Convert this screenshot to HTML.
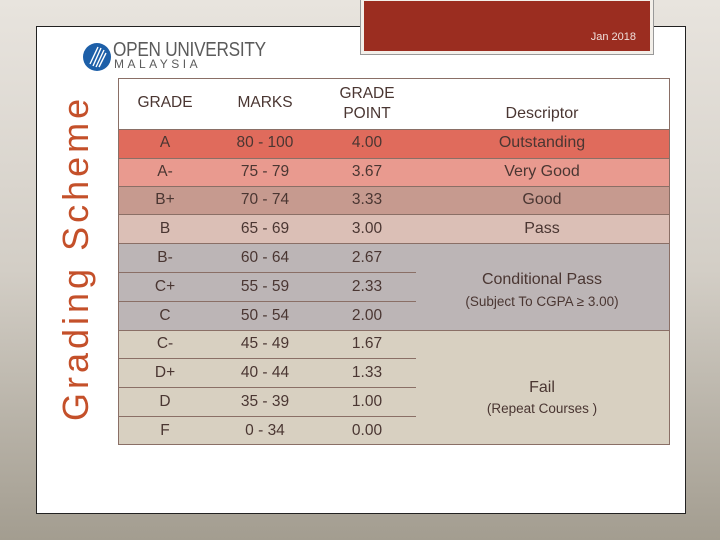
<!DOCTYPE html>
<html><head><meta charset="utf-8"><style>
*{margin:0;padding:0;box-sizing:border-box}
body{width:720px;height:540px;overflow:hidden;position:relative;font-family:"Liberation Sans",sans-serif;background:linear-gradient(#e8e4de 0%,#d3cec6 50%,#a39d90 100%)}
.panel{position:absolute;left:36px;top:26px;width:650px;height:488px;background:#fff;border:1px solid #222}
.red{position:absolute;left:361px;top:-2px;width:292px;height:56px;background:#9b2d20;border:3px solid #f3efe9;outline:1px solid #999}
.red span{position:absolute;right:14px;bottom:8px;color:#f0e0dc;font-size:11px}
.vt{position:absolute;left:56px;top:421px;transform:rotate(-90deg);transform-origin:0 0;color:#c4502a;font-size:36px;letter-spacing:4px;white-space:nowrap;width:360px;line-height:40px}
.tbl{position:absolute;left:118px;top:78px;width:552px;height:367px;border:1px solid #8a6f66;background:#fff;overflow:hidden}
.c{position:absolute;text-align:center;color:#4a3632;font-size:15.5px;line-height:16px}
.bg{position:absolute;left:0;width:550px}
.ln{position:absolute;left:0;width:297px;height:1px;background:#8a6f66}
.hl{position:absolute;left:0;width:550px;height:1px;background:#8a6f66}
</style></head><body>
<div class="panel"></div>
<div class="red"><span>Jan 2018</span></div>
<div class="vt">Grading Scheme</div>
<svg style="position:absolute;left:82px;top:42px" width="30" height="30" viewBox="0 0 30 30"><circle cx="15" cy="15" r="14" fill="#1d5fa8"/><g stroke="#fff" stroke-width="1.4"><line x1="8" y1="22" x2="16" y2="5"/><line x1="11" y1="24" x2="19" y2="6"/><line x1="14" y1="25" x2="22" y2="8"/><line x1="17" y1="25" x2="24" y2="11"/></g></svg>
<div style="position:absolute;left:113px;top:40px;color:#5b5b5b;font-size:20px;letter-spacing:-0.3px;line-height:20px;transform:scaleX(0.86);transform-origin:0 0;white-space:nowrap">OPEN UNIVERSITY</div>
<div style="position:absolute;left:114px;top:58px;color:#5b5b5b;font-size:12px;letter-spacing:3.5px;line-height:13px">MALAYSIA</div>
<div class="tbl">
<div class="bg" style="top:50px;height:29px;background:#e06b5c"></div>
<div class="bg" style="top:79px;height:28px;background:#e99a8f"></div>
<div class="bg" style="top:107px;height:28px;background:#c69a8f"></div>
<div class="bg" style="top:135px;height:29px;background:#dbbfb6"></div>
<div class="bg" style="top:164px;height:87px;background:#bcb5b6"></div>
<div class="bg" style="top:251px;height:115px;background:#d8d0c1"></div>
<div class="hl" style="top:50px"></div><div class="hl" style="top:79px"></div><div class="hl" style="top:107px"></div><div class="hl" style="top:135px"></div><div class="hl" style="top:164px"></div><div class="hl" style="top:251px"></div>
<div class="ln" style="top:193px"></div><div class="ln" style="top:222px"></div><div class="ln" style="top:279px"></div><div class="ln" style="top:308px"></div><div class="ln" style="top:337px"></div>
</div>
<div class="c" style="left:118px;width:94px;top:95px">GRADE</div>
<div class="c" style="left:218px;width:94px;top:95px">MARKS</div>
<div class="c" style="left:320px;width:94px;top:84px;line-height:20px">GRADE<br>POINT</div>
<div class="c" style="left:470px;width:144px;top:106px;font-size:16px">Descriptor</div>
<div style="position:absolute;left:0;top:0">
<div class="c" style="left:118px;width:94px;top:135px">A</div><div class="c" style="left:218px;width:94px;top:135px">80 - 100</div><div class="c" style="left:320px;width:94px;top:135px">4.00</div>
<div class="c" style="left:118px;width:94px;top:164px">A-</div><div class="c" style="left:218px;width:94px;top:164px">75 - 79</div><div class="c" style="left:320px;width:94px;top:164px">3.67</div>
<div class="c" style="left:118px;width:94px;top:192px">B+</div><div class="c" style="left:218px;width:94px;top:192px">70 - 74</div><div class="c" style="left:320px;width:94px;top:192px">3.33</div>
<div class="c" style="left:118px;width:94px;top:221px">B</div><div class="c" style="left:218px;width:94px;top:221px">65 - 69</div><div class="c" style="left:320px;width:94px;top:221px">3.00</div>
<div class="c" style="left:118px;width:94px;top:250px">B-</div><div class="c" style="left:218px;width:94px;top:250px">60 - 64</div><div class="c" style="left:320px;width:94px;top:250px">2.67</div>
<div class="c" style="left:118px;width:94px;top:279px">C+</div><div class="c" style="left:218px;width:94px;top:279px">55 - 59</div><div class="c" style="left:320px;width:94px;top:279px">2.33</div>
<div class="c" style="left:118px;width:94px;top:308px">C</div><div class="c" style="left:218px;width:94px;top:308px">50 - 54</div><div class="c" style="left:320px;width:94px;top:308px">2.00</div>
<div class="c" style="left:118px;width:94px;top:336px">C-</div><div class="c" style="left:218px;width:94px;top:336px">45 - 49</div><div class="c" style="left:320px;width:94px;top:336px">1.67</div>
<div class="c" style="left:118px;width:94px;top:365px">D+</div><div class="c" style="left:218px;width:94px;top:365px">40 - 44</div><div class="c" style="left:320px;width:94px;top:365px">1.33</div>
<div class="c" style="left:118px;width:94px;top:394px">D</div><div class="c" style="left:218px;width:94px;top:394px">35 - 39</div><div class="c" style="left:320px;width:94px;top:394px">1.00</div>
<div class="c" style="left:118px;width:94px;top:423px">F</div><div class="c" style="left:218px;width:94px;top:423px">0 - 34</div><div class="c" style="left:320px;width:94px;top:423px">0.00</div>
<div class="c" style="left:416px;width:252px;top:135px;font-size:16px">Outstanding</div>
<div class="c" style="left:416px;width:252px;top:164px;font-size:16px">Very Good</div>
<div class="c" style="left:416px;width:252px;top:192px;font-size:16px">Good</div>
<div class="c" style="left:416px;width:252px;top:221px;font-size:16px">Pass</div>
<div class="c" style="left:416px;width:252px;top:272px;font-size:16px">Conditional Pass</div>
<div class="c" style="left:416px;width:252px;top:294px;font-size:13.5px">(Subject To CGPA ≥ 3.00)</div>
<div class="c" style="left:416px;width:252px;top:380px;font-size:16px">Fail</div>
<div class="c" style="left:416px;width:252px;top:401px;font-size:13.5px">(Repeat Courses )</div>
</div>
</body></html>
